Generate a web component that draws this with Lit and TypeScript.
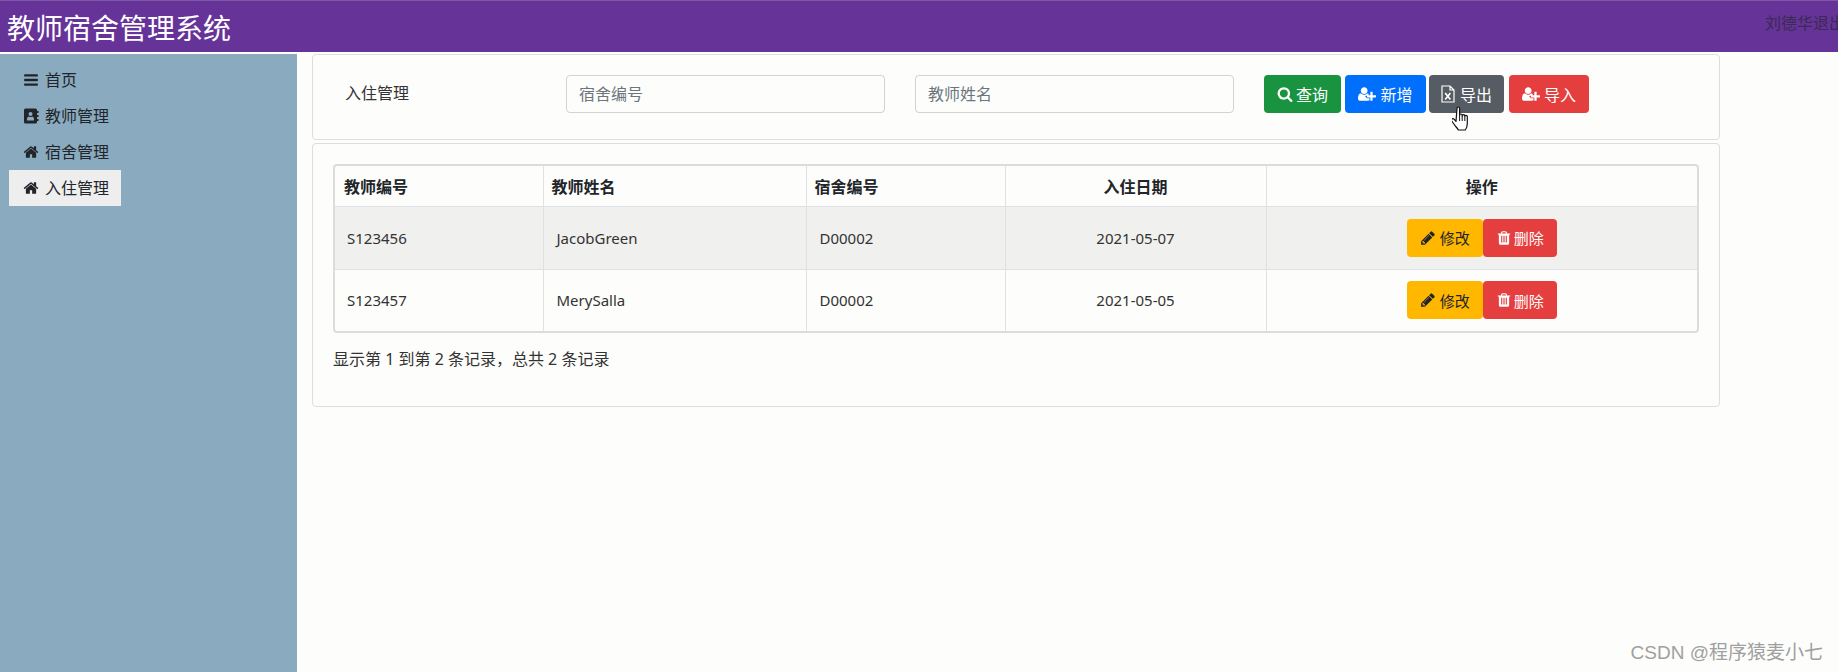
import { LitElement, html, css, svg } from "lit";
import { customElement } from "lit/decorators.js";

const P = {
  bars: "M1664 1344v128q0 26-19 45t-45 19h-1408q-26 0-45-19t-19-45v-128q0-26 19-45t45-19h1408q26 0 45 19t19 45zm0-512v128q0 26-19 45t-45 19h-1408q-26 0-45-19t-19-45v-128q0-26 19-45t45-19h1408q26 0 45 19t19 45zm0-512v128q0 26-19 45t-45 19h-1408q-26 0-45-19t-19-45v-128q0-26 19-45t45-19h1408q26 0 45 19t19 45z",
  home: "M1472 992v480q0 26-19 45t-45 19h-384v-384h-256v384h-384q-26 0-45-19t-19-45v-480q0-1 .5-3t.5-3l575-474 575 474q1 2 1 6zm223-69l-62 74q-8 9-21 11h-3q-13 0-21-7l-692-577-692 577q-12 8-24 7-13-2-21-11l-62-74q-8-10-7-23.500t11-21.500l719-599q32-26 76-26t76 26l244 204v-195q0-14 9-23t23-9h192q14 0 23 9t9 23v408l219 182q10 8 11 21.500t-7 23.500z",
  search: "M1216 832q0-185-131.500-316.500t-316.500-131.500-316.500 131.500-131.500 316.500 131.500 316.500 316.500 131.500 316.500-131.500 131.500-316.500zm512 832q0 52-38 90t-90 38q-54 0-90-38l-343-342q-179 124-399 124-143 0-273.500-55.500t-225-150-150-225-55.500-273.500 55.500-273.500 150-225 225-150 273.500-55.500 273.500 55.500 225 150 150 225 55.500 273.500q0 220-124 399l343 343q37 37 37 90z",
  pencil: "M491 1536l91-91-235-235-91 91v107h128v128h107zm523-928q0-22-22-22-10 0-17 7l-542 542q-7 7-7 17 0 22 22 22 10 0 17-7l542-542q7-7 7-17zm-54-192l416 416-832 832h-416v-416zm683 96q0 53-37 90l-166 166-416-416 166-165q36-38 90-38 53 0 91 38l235 234q37 39 37 91z",
  trash: "M704 1376v-704q0-14-9-23t-23-9h-64q-14 0-23 9t-9 23v704q0 14 9 23t23 9h64q14 0 23-9t9-23zm256 0v-704q0-14-9-23t-23-9h-64q-14 0-23 9t-9 23v704q0 14 9 23t23 9h64q14 0 23-9t9-23zm256 0v-704q0-14-9-23t-23-9h-64q-14 0-23 9t-9 23v704q0 14 9 23t23 9h64q14 0 23-9t9-23zm-544-992h448l-48-117q-7-9-17-11h-317q-10 2-17 11zm928 32v64q0 14-9 23t-23 9h-96v948q0 83-47 143.500t-113 60.500h-832q-66 0-113-58.500t-47-141.500v-952h-96q-14 0-23-9t-9-23v-64q0-14 9-23t23-9h309l70-167q15-37 54-63t79-26h320q40 0 79 26t54 63l70 167h309q14 0 23 9t9 23z",
  userPlus: "M704 896q-159 0-271.500-112.500t-112.500-271.500 112.500-271.500 271.500-112.500 271.500 112.500 112.500 271.500-112.500 271.500-271.500 112.500zm960 128h352q13 0 22.500 9.500t9.500 22.500v192q0 13-9.500 22.500t-22.500 9.500h-352v352q0 13-9.500 22.500t-22.500 9.500h-192q-13 0-22.500-9.500t-9.500-22.500v-352h-352q-13 0-22.500-9.500t-9.500-22.500v-192q0-13 9.500-22.500t22.500-9.500h352v-352q0-13 9.500-22.500t22.500-9.500h192q13 0 22.500 9.500t9.500 22.500v352zm-736 224q0 52 38 90t90 38h256v238q-68 50-171 50h-874q-121 0-194-69t-73-190q0-53 3.500-103.500t14-109 26.500-108.500 43-97.500 62-81 85.500-53.500 111.500-20q19 0 39 17 79 61 154.500 91.500t164.500 30.500 164.500-30.500 154.500-91.500q20-17 39-17 78 0 145 37v219h-256q-52 0-90 38t-38 90z",
};

const icon = (d: string, w = 16, vb = "0 0 1792 1792") =>
  html`<svg class="ic" width=${w} height="16" viewBox=${vb} fill="currentColor" aria-hidden="true">${svg`<path d=${d}></path>`}</svg>`;
const bars = () => icon(P.bars);
const home = () => icon(P.home);
const userPlus = () => icon(P.userPlus, 18, "0 0 2048 1792");

const addressBook = () => html`<svg class="ic" width="16" height="16" viewBox="0 0 16 16" aria-hidden="true">
  <path fill="currentColor" fill-rule="evenodd" d="M2.500 .5h10q1.500 0 1.500 1.500v12q0 1.500-1.500 1.500h-10q-1.500 0-1.500-1.500v-12q0-1.500 1.500-1.500zM7.500 4a2 2 0 1 0 0 4 2 2 0 0 0 0-4zM4 12.500h7v-1.500q0-2-1.700-2.500-1.800 1-3.600 0-1.700.5-1.700 2.500z"></path>
  <path fill="currentColor" d="M14 3h1.500v2H14zM14 7h1.500v2H14zM14 11h1.500v2H14z"></path>
</svg>`;

const fileExcel = () => html`<svg class="ic" width="14" height="18" viewBox="0 0 14 18" aria-hidden="true">
  <path fill="none" stroke="currentColor" stroke-width="1.200" d="M1 1h8l4 4v12H1zM9 1v4h4"></path>
  <path fill="none" stroke="currentColor" stroke-width="1.700" d="M4.200 8l5.200 6.500M9.400 8l-5.200 6.500"></path>
</svg>`;

const rows = [
  { id: "S123456", name: "JacobGreen", room: "D00002", date: "2021-05-07" },
  { id: "S123457", name: "MerySalla", room: "D00002", date: "2021-05-05" },
];

const nav = [
  { label: "首页", icon: bars, active: false },
  { label: "教师管理", icon: addressBook, active: false },
  { label: "宿舍管理", icon: home, active: false },
  { label: "入住管理", icon: home, active: true },
];

@customElement("app-root")
export class AppRoot extends LitElement {
  static styles = css`
    :host {
      display: block;
      position: relative;
      height: 672px;
      overflow: hidden;
      background: #fdfdfb;
      color: #212529;
      font-family: "Noto Sans", "Noto Sans CJK SC", sans-serif;
      font-size: 16px;
    }
    * { box-sizing: border-box; }
    .ic { flex: none; display: block; }
    .top {
      height: 52px;
      background: #663399;
      border-top: 1px solid #7d58a8;
      display: flex;
      align-items: center;
      overflow: hidden;
      padding-left: 7px;
    }
    .brand {
      font-size: 28px;
      line-height: 52px;
      color: #fff;
      margin-top: 2px;
    }
    .who {
      margin-left: auto;
      margin-right: -7px;
      flex: none;
      white-space: nowrap;
      color: #3a2a55;
      line-height: 24px;
      margin-top: -7px;
    }
    .body {
      display: grid;
      grid-template-columns: 297px 1408px;
      column-gap: 15px;
      margin-top: 2px;
      height: 618px;
    }
    .side {
      background: #8aabbf;
      padding: 8px 0 0 9px;
    }
    .item {
      width: 112px;
      height: 36px;
      display: flex;
      align-items: center;
      gap: 6px;
      padding-left: 14px;
      color: #212529;
      line-height: 24px;
    }
    .item span { margin-top: -1px; }
    .item.on { background: #eeeeee; }
    .main { display: flex; flex-direction: column; gap: 3px; }
    .card {
      background: #fdfdfb;
      border: 1px solid #dedede;
      border-radius: 4px;
    }
    .filter {
      height: 86px;
      padding: 20px 0 0 32px;
      display: flex;
      align-items: flex-start;
      gap: 30px;
    }
    .filter label {
      width: 191px;
      line-height: 36px;
      color: #333;
    }
    .field {
      width: 319px;
      height: 38px;
      border: 1px solid #ced4da;
      border-radius: 4px;
      padding: 0 12px;
      background: #fdfdfb;
      font: inherit;
      color: #495057;
      outline: none;
    }
    .field::placeholder { color: #6c757d; opacity: 1; }
    .btns { display: flex; }
    .btn {
      height: 38px;
      border: 1px solid transparent;
      border-radius: 4px;
      display: inline-flex;
      align-items: center;
      justify-content: center;
      gap: 3px;
      padding: 0;
      font: inherit;
      color: #fff;
    }
    .green { background: #1a9340; width: 77px; margin-right: 4px; }
    .blue { background: #006ffb; width: 81px; margin-right: 3px; gap: 4px; }
    .gray { background: #565c63; width: 75px; margin-right: 5px; gap: 5px; }
    .red { background: #e53e3e; width: 80px; gap: 4px; }
    .yellow { background: #ffb700; color: #212529; width: 76px; gap: 4px; }
    .del { background: #e53e3e; width: 74px; gap: 2px; }
    .list {
      height: 264px;
      padding: 20px 20px 0 20px;
    }
    .tw {
      border: 2px solid #dcdcdc;
      border-radius: 4px;
      width: 1366px;
    }
    table {
      width: 1362px;
      table-layout: fixed;
      border-collapse: collapse;
    }
    th, td {
      border-left: 1px solid #dee2e6;
      border-top: 1px solid #dee2e6;
      padding: 0;
    }
    th:first-child, td:first-child { border-left: 0; }
    thead th { border-top: 0; }
    th {
      height: 40px;
      text-align: left;
      padding-left: 8px;
      font-weight: 700;
      color: #212529;
    }
    th:first-child { padding-left: 9px; }
    th.c { text-align: center; padding-left: 0; }
    td {
      height: 62px;
      padding-left: 13px;
      font-size: 15px;
      color: #333;
    }
    td:first-child { padding-left: 12px; }
    tbody tr:first-child td { height: 63px; }
    td.c { text-align: center; padding-left: 0; }
    tbody tr:nth-child(odd) td { background: #f0f0ef; }
    .ops { display: flex; justify-content: center; margin-left: -13px; }
    .foot {
      margin-top: 14px;
      line-height: 24px;
      color: #333;
    }
    .mark {
      position: absolute;
      right: 15px;
      bottom: 6px;
      font-family: "Liberation Sans", "Noto Sans CJK SC", sans-serif;
      font-size: 19px;
      line-height: 26px;
      color: #a0a0a0;
    }
    .cursor {
      position: absolute;
      left: 1452px;
      top: 106px;
    }
  `;

  render() {
    return html`
      <header class="top">
        <div class="brand">教师宿舍管理系统</div>
        <div class="who">刘德华退出</div>
      </header>
      <div class="body">
        <nav class="side">
          ${nav.map(
            (n) => html`<div class="item ${n.active ? "on" : ""}">${n.icon()}<span>${n.label}</span></div>`
          )}
        </nav>
        <main class="main">
          <section class="card filter">
            <label>入住管理</label>
            <input class="field" placeholder="宿舍编号" />
            <input class="field" placeholder="教师姓名" />
            <div class="btns">
              <button class="btn green">${icon(P.search)}查询</button>
              <button class="btn blue">${userPlus()}新增</button>
              <button class="btn gray">${fileExcel()}导出</button>
              <button class="btn red">${userPlus()}导入</button>
            </div>
          </section>
          <section class="card list">
            <div class="tw">
              <table>
                <colgroup>
                  <col style="width:208px" /><col style="width:263px" /><col style="width:199px" /><col style="width:261px" /><col style="width:431px" />
                </colgroup>
                <thead>
                  <tr><th>教师编号</th><th>教师姓名</th><th>宿舍编号</th><th class="c">入住日期</th><th class="c">操作</th></tr>
                </thead>
                <tbody>
                  ${rows.map(
                    (r) => html`<tr>
                      <td>${r.id}</td><td>${r.name}</td><td>${r.room}</td><td class="c">${r.date}</td>
                      <td>
                        <div class="ops">
                          <button class="btn yellow">${icon(P.pencil, 16)}修改</button>
                          <button class="btn del">${icon(P.trash)}删除</button>
                        </div>
                      </td>
                    </tr>`
                  )}
                </tbody>
              </table>
            </div>
            <div class="foot">显示第 1 到第 2 条记录，总共 2 条记录</div>
          </section>
        </main>
      </div>
      <svg class="cursor" width="20" height="26" viewBox="0 0 20 26" aria-hidden="true">
        <path fill="#fff" stroke="#111" stroke-width="1.200" stroke-linejoin="round" d="M5 2.500q0-1.500 1.300-1.500t1.300 1.500v7q0-1.500 1.300-1.500t1.300 1.500v.5q0-1.300 1.300-1.300t1.300 1.300v.5q0-1.200 1.200-1.200t1.300 1.200v7q0 4-2 6.500h-7q-1-2-3-4l-3.500-5q-.8-1.400.3-2.100t2.200.5l1.700 2z"></path>
        <path fill="none" stroke="#111" stroke-width="1" d="M7.600 10v5M10.200 10v5M12.800 11v4"></path>
      </svg>
      <div class="mark">CSDN @程序猿麦小七</div>
    `;
  }
}
